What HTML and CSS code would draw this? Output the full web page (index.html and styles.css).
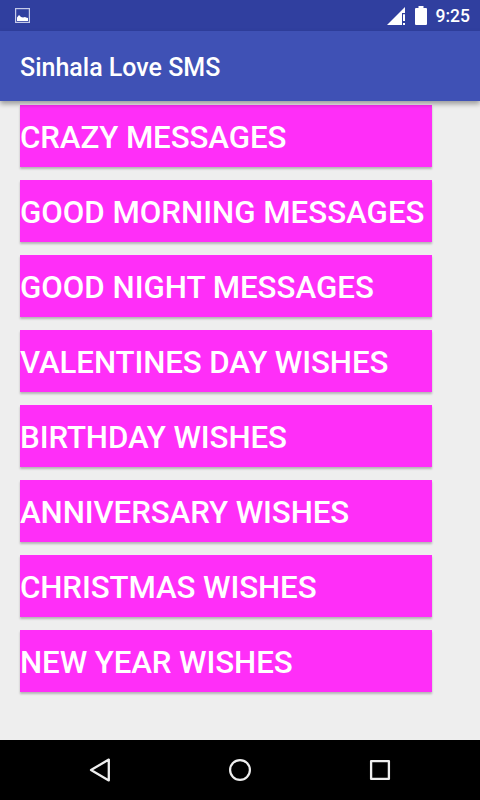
FILE: index.html
```html
<!DOCTYPE html>
<html lang="en">
<head>
    <meta charset="UTF-8">
    <meta name="viewport" content="width=device-width, initial-scale=1.0">
    <title>Sinhala Love SMS</title>
    <link rel="stylesheet" href="styles.css">
</head>
<body>
    <div class="status-bar">
        <svg class="icon-picture" width="15" height="15" viewBox="0 0 15 15">
            <rect x="0.6" y="0.6" width="13.800" height="13.800" fill="none" stroke="#c5cae9" stroke-width="1.2"/>
            <path d="M2 13V9.500l2-2.500 2 2 2 .5L10 9l1 .5 2 .5v3z" fill="#ffffff"/>
        </svg>
        <div class="status-right">
            <svg class="icon-signal" width="18" height="18" viewBox="0 0 18 18">
                <path d="M0 18L18 0v6h-3v12z" fill="#ffffff"/>
                <path d="M16 7.200h2v6.800h-2zM16 16h2v2h-2z" fill="#ffffff"/>
            </svg>
            <svg class="icon-battery" width="12" height="19" viewBox="0 0 12 19">
                <path d="M3.500 0h5v2H11q1 0 1 1v15q0 1-1 1H1q-1 0-1-1V3q0-1 1-1h2.500z" fill="#ffffff"/>
            </svg>
            <span class="clock">9:25</span>
        </div>
    </div>

    <header>
        <h1>Sinhala Love SMS</h1>
    </header>

    <main>
        <button class="tight">Crazy Messages</button>
        <button>Good Morning Messages</button>
        <button>Good Night Messages</button>
        <button class="tight">Valentines Day Wishes</button>
        <button class="tight">Birthday Wishes</button>
        <button class="tight">Anniversary Wishes</button>
        <button class="tight">Christmas Wishes</button>
        <button class="tight">New Year Wishes</button>
    </main>

    <nav>
        <svg width="24" height="24" viewBox="0 0 24 24">
            <path d="M20.800 1.600v20.800L3 12z" fill="none" stroke="#eeeeee" stroke-width="2.300" stroke-linejoin="round"/>
        </svg>
        <svg width="24" height="24" viewBox="0 0 24 24">
            <circle cx="12" cy="12" r="9.900" fill="none" stroke="#eeeeee" stroke-width="2.200"/>
        </svg>
        <svg width="24" height="24" viewBox="0 0 24 24">
            <rect x="3.100" y="3.100" width="17.800" height="17.800" fill="none" stroke="#eeeeee" stroke-width="2.300" stroke-linejoin="round"/>
        </svg>
    </nav>
</body>
</html>
```

FILE: styles.css
```css
body {
    font-family: Roboto, "Liberation Sans", sans-serif;
    margin: 0;
    padding: 0;
    height: 800px;
    display: flex;
    flex-direction: column;
    background-color: #eeeeee;
    overflow: hidden;
}

.status-bar {
    height: 31px;
    box-sizing: border-box;
    padding: 0 10px 0 15px;
    display: flex;
    align-items: center;
    justify-content: space-between;
    background: #303f9f;
    color: #ffffff;
}

.status-right {
    display: flex;
    align-items: center;
}

.icon-signal {
    margin-right: 10px;
    margin-top: 1px;
}

.icon-battery {
    margin-right: 9px;
}

.clock {
    font-size: 17.5px;
    font-weight: 500;
    line-height: 31px;
    padding-top: 1px;
}

header {
    height: 70px;
    box-sizing: border-box;
    padding: 2px 20px 0;
    display: flex;
    align-items: center;
    background: #3f51b5;
    color: #ffffff;
    box-shadow: 0 3px 5px rgba(0, 0, 0, 0.35);
    position: relative;
}

h1 {
    margin: 0;
    font-size: 25px;
    font-weight: 500;
}

main {
    flex: 1;
    padding: 4px 48px 0 20px;
    display: flex;
    flex-direction: column;
    gap: 13px;
}

button {
    height: 62px;
    padding: 2px 0 0;
    border: none;
    background-color: #ff2ef8;
    color: #ffffff;
    font-family: inherit;
    font-size: 31.25px;
    font-weight: 500;
    text-align: left;
    text-transform: uppercase;
    white-space: nowrap;
    box-shadow: 0 2px 2px rgba(0, 0, 0, 0.24);
    cursor: pointer;
}

.tight {
    letter-spacing: -0.1px;
}

nav {
    height: 60px;
    padding: 0 30px;
    display: flex;
    align-items: center;
    background: #000000;
}

nav svg {
    flex: 1;
}
```
